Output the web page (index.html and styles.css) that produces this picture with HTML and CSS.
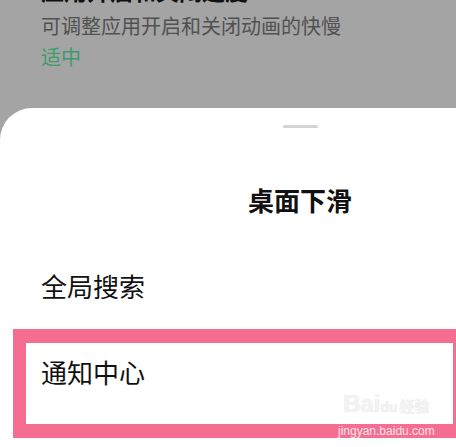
FILE: index.html
```html
<!DOCTYPE html>
<html lang="zh-CN">
<head>
    <meta charset="UTF-8">
    <meta name="viewport" content="width=device-width, initial-scale=1.0">
    <title>桌面下滑</title>
    <link rel="stylesheet" href="styles.css">
</head>
<body>
    <div class="backdrop">
        <p class="setting-title">应用开启和关闭速度</p>
        <p class="setting-desc">可调整应用开启和关闭动画的快慢</p>
        <p class="setting-value">适中</p>
    </div>
    <div class="sheet">
        <div class="handle"></div>
        <h1>桌面下滑</h1>
        <div class="option">全局搜索</div>
        <div class="option selected">通知中心</div>
        <div class="watermark">
            <span class="wm-logo">Bai<span class="wm-du">du</span><span class="wm-jy">经验</span></span>
            <span class="wm-url">jingyan.baidu.com</span>
        </div>
    </div>
</body>
</html>
```
FILE: styles.css
```css
body {
    margin: 0;
    width: 456px;
    height: 447px;
    overflow: hidden;
    background-color: #a4a4a4;
    font-family: "Noto Sans CJK SC", "Noto Sans", sans-serif;
}

.backdrop {
    display: flow-root;
    height: 108px;
    padding-left: 41px;
    box-sizing: border-box;
}

.backdrop p {
    margin: 0;
    line-height: 30px;
    white-space: nowrap;
}

.backdrop .setting-title {
    margin-top: -25px;
    font-size: 23px;
    font-weight: bold;
    color: #111;
}

.backdrop .setting-desc {
    margin-top: 6px;
    font-size: 20px;
    color: #515151;
}

.backdrop .setting-value {
    margin-top: 1px;
    font-size: 20px;
    color: #3c9c6b;
}

.sheet {
    position: relative;
    width: 600px;
    height: 339px;
    background-color: #fff;
    border-top-left-radius: 32px;
}

.handle {
    width: 35px;
    height: 3px;
    margin: 0 auto;
    position: relative;
    top: 17px;
    border-radius: 2px;
    background-color: #d4d4d4;
}

h1 {
    margin: 52px 0 0;
    padding-top: 17px;
    font-size: 26px;
    line-height: 40px;
    font-weight: bold;
    text-align: center;
    color: #111;
}

.option {
    font-size: 26px;
    line-height: 40px;
    color: #111;
    padding-left: 41px;
    margin-top: 46px;
}

.option.selected {
    box-sizing: border-box;
    width: 443px;
    margin: 23px 0 0 13px;
    padding: 9px 0 32px 15px;
    border: 14px solid #f56e91;
    border-left-width: 13px;
    border-right-width: 3px;
}

.watermark {
    position: absolute;
    left: 338px;
    top: 283px;
    display: flex;
    flex-direction: column;
    align-items: center;
    font-family: "Liberation Sans", "Noto Sans CJK SC", sans-serif;
}

.wm-logo {
    font-size: 24px;
    line-height: 26px;
    font-weight: bold;
    color: #f3f3f3;
    text-shadow: 0 0 1px #dcdcdc;
}

.wm-du {
    font-size: 14px;
}

.wm-jy {
    font-size: 15px;
    margin-left: 2px;
}

.wm-url {
    font-size: 12px;
    line-height: 14px;
    margin-top: 4px;
    color: #fbe3ea;
}
```
